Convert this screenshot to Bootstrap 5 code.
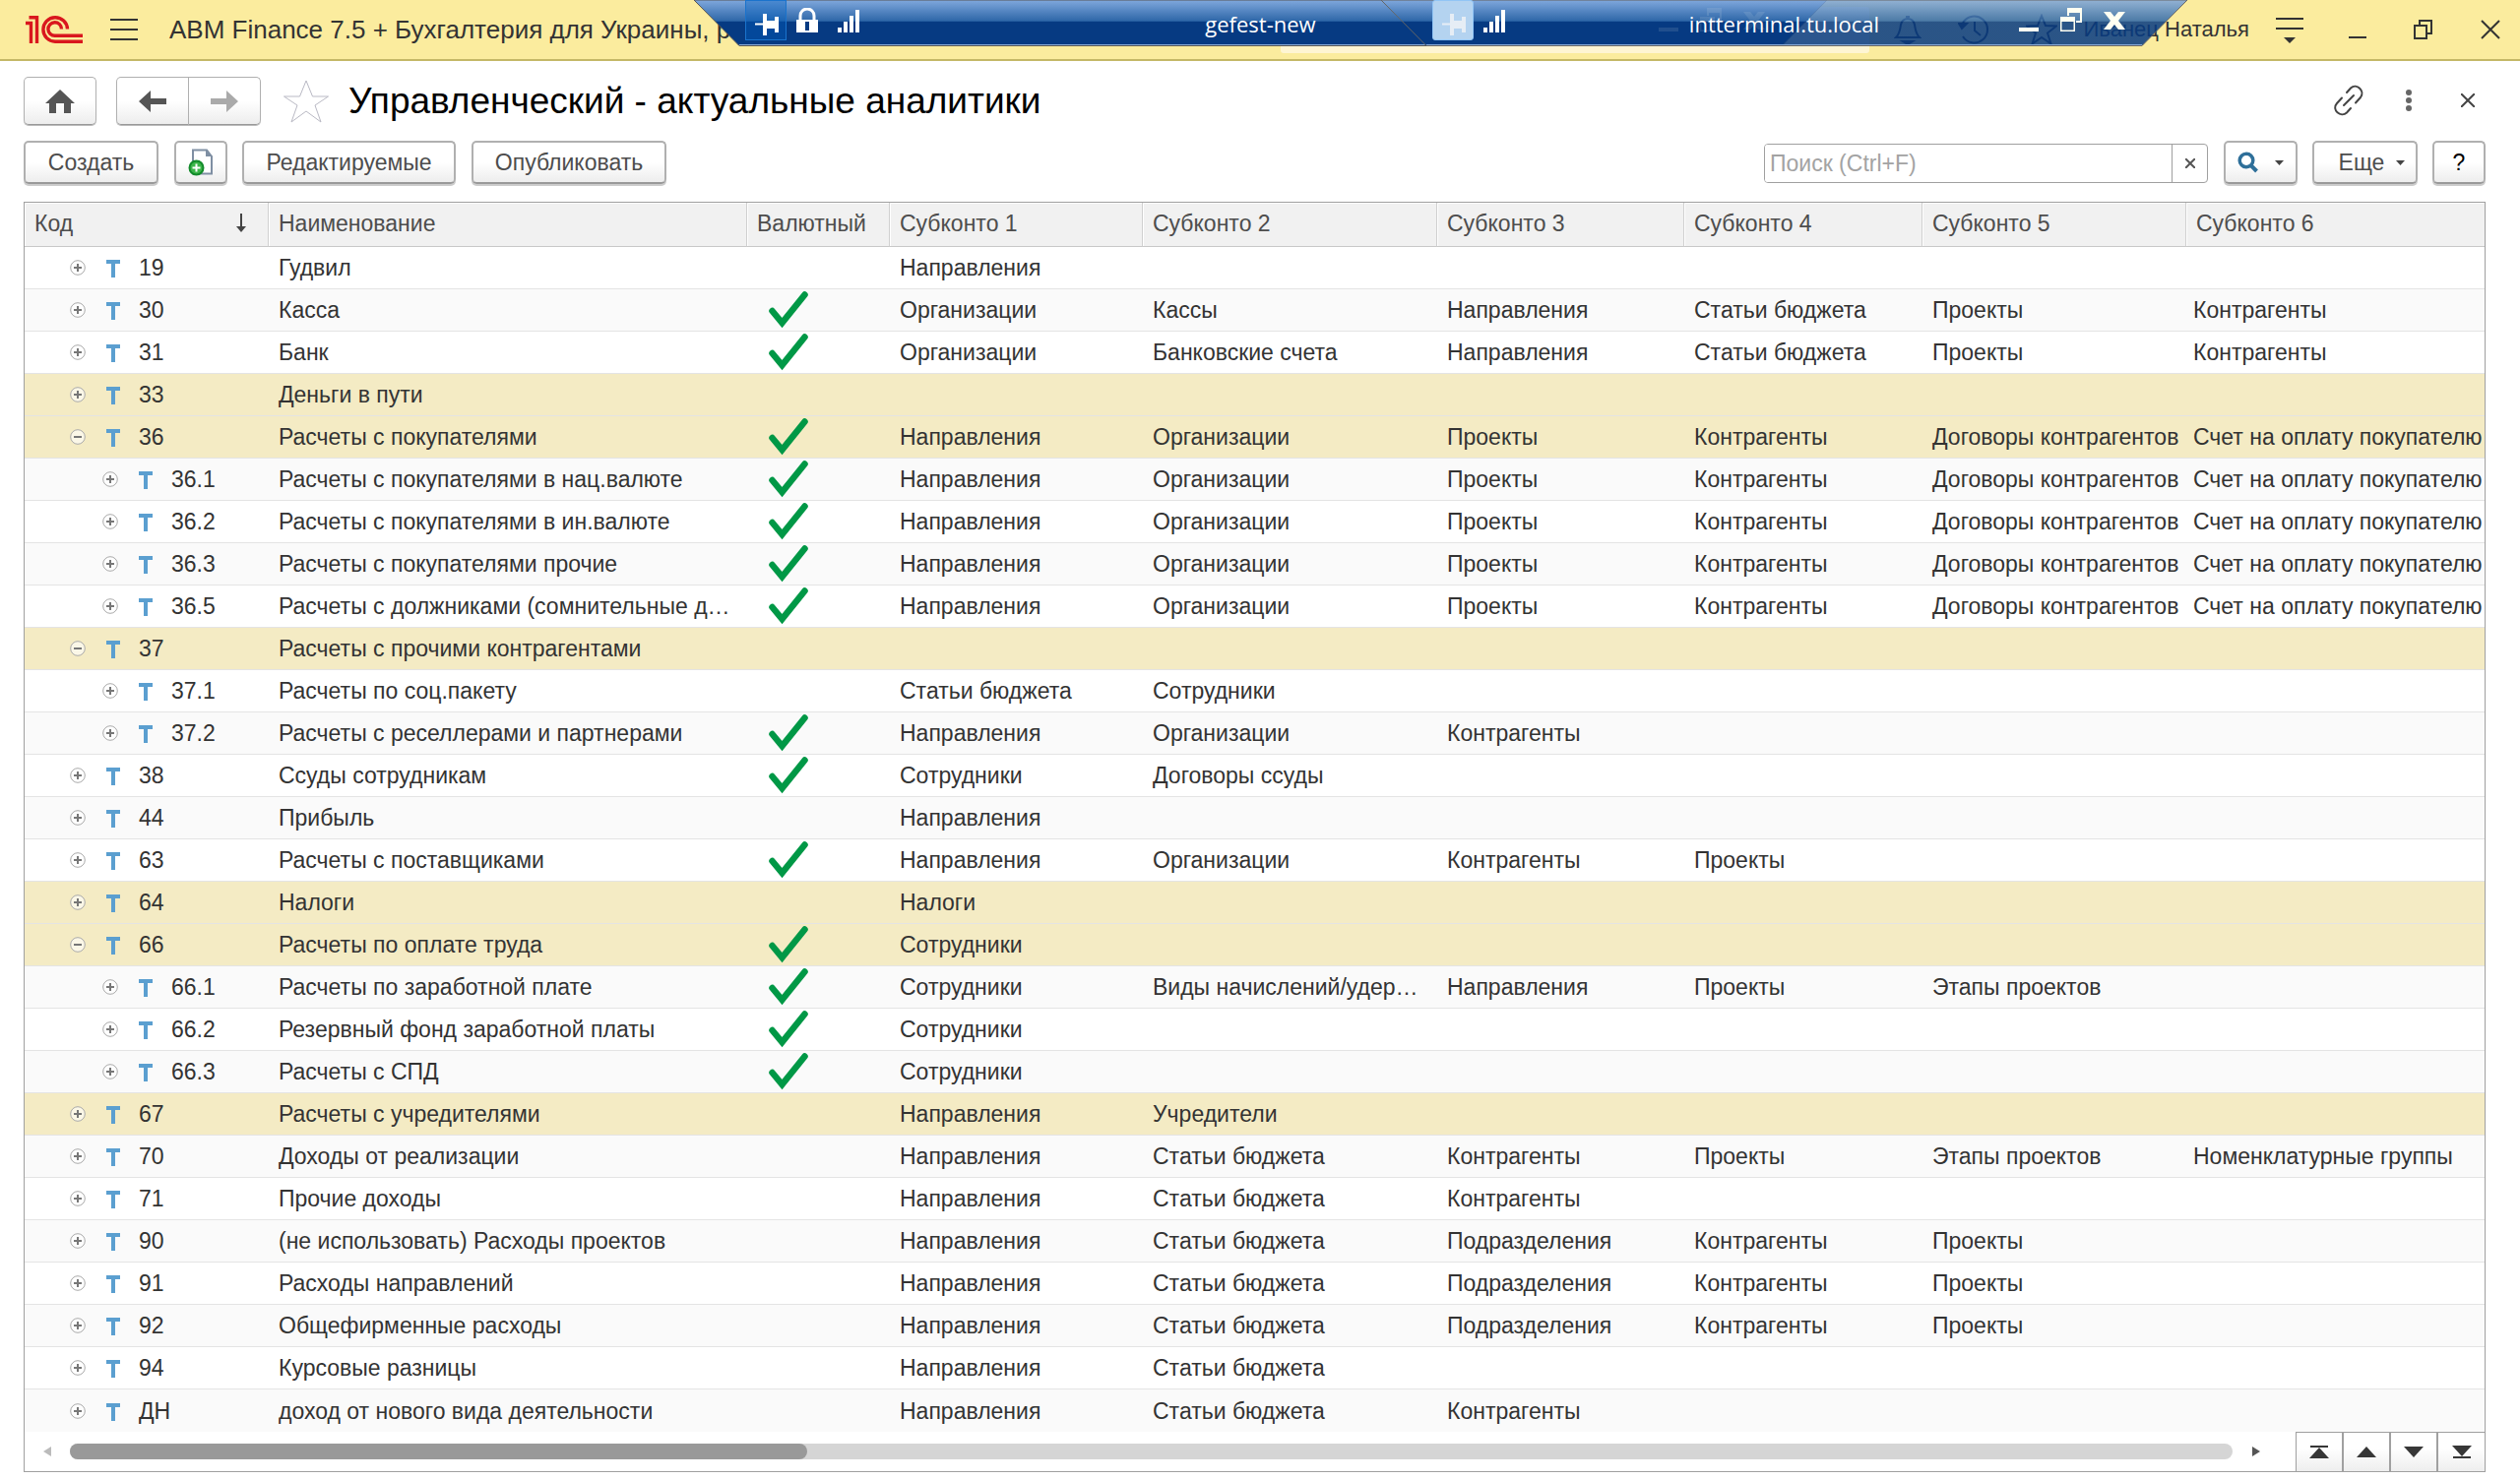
<!DOCTYPE html>
<html lang="ru">
<head>
<meta charset="utf-8">
<meta name="viewport" content="width=device-width, initial-scale=1">
<title>Управленческий - актуальные аналитики</title>
<link href="https://cdn.jsdelivr.net/npm/bootstrap@5.3.0/dist/css/bootstrap.min.css" rel="stylesheet">
<style>
  body { font-family: "Liberation Sans", Arial, sans-serif; font-size: 23px; line-height: 28px; color: #333; background: #fff; }
  svg { display: block; flex: none; }
  .icon-btn { border: 0; background: none; padding: 0; color: inherit; flex: none; }

  /* application title bar */
  .app-bar { height: 62px; background: #fbec9e; border-bottom: 2px solid #c4b866; color: #333; padding: 0 20px 0 26px; }
  .app-title { font-size: 26px; margin-left: 32px; white-space: nowrap; }
  .app-search { width: 598px; height: 47px; background: #fef5d3; border: 0; border-radius: 3px; margin-left: auto; margin-right: 25px; margin-top: 1px; }
  .app-tools { gap: 37px; }
  .user-name { color: inherit; text-decoration: none; font-size: 22px; margin-left: 26px; }
  .service-btn { margin-left: 27px; }
  .window-tools { gap: 48px; margin-left: 46px; }

  /* remote session bars lying over the title bar */
  .session-bar { position: absolute; top: 0; height: 47px; color: #fff; font-family: "Open Sans", "Noto Sans", sans-serif; font-size: 22px; }
  .session-bar > .shape { position: absolute; inset: 0; width: 100%; height: 100%; }
  .session-bar > .inner { position: relative; height: 47px; padding: 0 63px 0 52px; }
  .session-outer { left: 705px; width: 1151px; }
  .session-top { left: 1403px; width: 819px; }
  .session-name { position: absolute; left: 0; right: 0; top: 10px; text-align: center; pointer-events: none; }
  .pin { width: 42px; height: 41px; background: #0060c066; border: 1px solid #1a73cc; margin-right: 10px; }
  .pin svg { margin: 9px 0 0 9px; }
  .pin-lit { background: #b4d3f0; border-color: #92c5f5; border-radius: 3px; color: #e6edf5; }
  .session-controls { gap: 22px; margin-left: auto; color: #fffff2; }
  .ghost { opacity: .7; }

  /* form heading and command bar */
  .form-head { padding: 16px 35px 0 24px; height: 68px; }
  .soft-btn { --bs-btn-font-size: 23px; --bs-btn-line-height: 28px; --bs-btn-color: #4d4d4d; --bs-btn-hover-color: #4d4d4d; --bs-btn-border-color: #b0b0b0; --bs-btn-hover-border-color: #999; --bs-btn-border-radius: 5px; background: linear-gradient(#fff 50%, #ededed); height: 49px; padding: 0; display: flex; align-items: center; justify-content: center; border-bottom-color: #999; box-shadow: 0 1px 0 #bbb; white-space: nowrap; flex: none; }
  .cmd-btn { height: 44px; border-width: 2px; box-shadow: 0 2px 0 #ccc; }
  .home-btn { width: 74px; }
  .nav-pair { width: 147px; margin-left: 20px; }
  .nav-pair .btn { flex: 1; }
  .star-btn { margin: 3px 0 0 23px; }
  .form-title { font-size: 37px; line-height: 50px; font-weight: 400; color: #000; margin: 0 0 0 20px; }
  .head-tools { gap: 42px; margin-left: auto; padding-right: 11px; }
  .cmd-bar { padding: 13px 35px 0 24px; height: 75px; }
  .w-create { width: 137px; }
  .w-copy { width: 54px; margin-left: 16px; }
  .w-edit { width: 217px; margin-left: 15px; }
  .w-publish { width: 198px; margin-left: 16px; }
  .w-find { width: 75px; margin-left: 16px; gap: 16px; }
  .w-more { width: 107px; margin-left: 15px; gap: 12px; padding-left: 14px; }
  .w-help { width: 54px; margin-left: 15px; --bs-btn-color: #000; }
  .find-box { width: 451px; height: 40px; margin-top: 3px; border: 1px solid #a0a0a0; border-radius: 4px; overflow: hidden; }
  .find-box input { flex: 1; min-width: 0; border: 0; outline: 0; padding: 0 5px; color: #333; }
  .find-box input::placeholder { color: #a3a3a3; opacity: 1; }
  .find-box button { width: 36px; border-left: 1px solid #a0a0a0; display: flex; align-items: center; justify-content: center; }

  /* list of accounts */
  .list-frame { margin: 0 35px 9px 24px; border: 1px solid #a0a0a0; }
  .acc-table { width: 100%; table-layout: fixed; border-collapse: separate; border-spacing: 0; }
  .acc-table th { height: 45px; background: #f1f1f1; color: #4d4d4d; font-weight: 400; padding: 0 0 2px 10px; border-bottom: 1px solid #c8c8c8; border-left: 1px solid #d0d0d0; box-shadow: inset 1px 1px #fff; }
  .acc-table th:first-child, .acc-table td:first-child { border-left: 0; }
  .acc-table td { height: 43px; padding: 0 0 0 11px; border-bottom: 1px solid #e4e4e4; white-space: nowrap; overflow: hidden; text-overflow: ellipsis; }
  .acc-table td:nth-child(2) { padding-right: 16px; }
  .acc-table td:nth-child(3) { padding-left: 22px; }
  .acc-table td:last-child { padding-left: 8px; text-overflow: clip; }
  .acc-table tbody tr:nth-child(even) { background: #fafafa; }
  .acc-table tbody tr.is-group { background: #f4ebc4; }
  .acc-table tbody tr:last-child td { border-bottom: 0; }
  .acc-table td.code-cell { padding-left: 46px; }
  .acc-table td.code-sub { padding-left: 79px; }
  .acc-mark { margin: 2px 19px 0 21px; }
  .c-code { width: 247px; } .c-name { width: 486px; } .c-cur { width: 145px; }
  .c-s1 { width: 257px; } .c-s2 { width: 299px; } .c-s3 { width: 251px; }
  .c-s4 { width: 242px; } .c-s5 { width: 268px; }

  .list-foot { height: 40px; }
  .foot-left { margin-left: 19px; }
  .foot-right { margin-right: 36px; }
  .track { flex: 1; height: 16px; border-radius: 8px; background: #d5d5d5; margin: 0 20px 0 19px; }
  .thumb { height: 16px; border-radius: 8px; background: #999; }
  .page-btn { width: 48px; height: 40px; border: 1px solid #a0a0a0; border-bottom: 0; background: linear-gradient(#fff 40%, #eee); display: flex; align-items: center; justify-content: center; padding: 0; color: #373737; }
  .page-btn:last-child { border-right: 0; }
</style>
</head>
<body>

<svg class="position-absolute" width="0" height="0" aria-hidden="true">
  <defs>
    <linearGradient id="barFill" x1="0" y1="0" x2="0" y2="1">
      <stop offset="0" stop-color="#80a8dd"/><stop offset=".46" stop-color="#2e67a8"/>
      <stop offset=".47" stop-color="#063a82"/><stop offset="1" stop-color="#063a82"/>
    </linearGradient>
  </defs>
  <symbol id="i-pin" viewBox="0 0 24 24"><path fill="currentColor" d="M0 10.500h8V1h4v7h8V4h4v16h-4v-4h-8v7H8V12.500H0z"/></symbol>
  <symbol id="i-signal" viewBox="0 0 22 24"><path fill="currentColor" d="M0 19h4v5H0zM6 13h4v11H6zM12 7h4v17h-4zM18 1h4v23h-4z"/></symbol>
  <symbol id="i-min" viewBox="0 0 20 24"><path fill="currentColor" d="M0 16h20v4H0z"/></symbol>
  <symbol id="i-restore" viewBox="0 0 22 24"><path fill="currentColor" fill-rule="evenodd" d="M7 0h15v15h-6v-2h4V5H9v3H7zM0 9h15v15H0zM1.500 14v8.500h12V14z"/></symbol>
  <symbol id="i-x" viewBox="0 0 22 20"><path fill="currentColor" d="M0 0h7l4 5 4-5h7l-7 9 7 9h-7l-4-5-4 5H0l7-9z"/></symbol>
  <symbol id="i-plus" viewBox="0 0 16 16"><circle cx="8" cy="8" r="7.300" fill="#fff" fill-opacity=".6" stroke="#aaa"/><path d="M4 8h8M8 4v8" stroke="#777" stroke-width="2"/></symbol>
  <symbol id="i-minus" viewBox="0 0 16 16"><circle cx="8" cy="8" r="7.300" fill="#fff" fill-opacity=".6" stroke="#aaa"/><path d="M4 8h8" stroke="#777" stroke-width="2"/></symbol>
  <symbol id="i-acc" viewBox="0 0 14 18"><path fill="#5b9fd0" d="M0 0h14v4H9v14H5V4H0z"/></symbol>
  <symbol id="i-check" viewBox="0 0 42 38"><path d="M4.500 20l10 12L37.500 3.500" fill="none" stroke="#009846" stroke-width="6.500" stroke-linecap="round" stroke-linejoin="miter"/></symbol>
</svg>

<header class="app-bar d-flex align-items-center position-relative">
  <svg width="58" height="28" viewBox="0 0 58 28" role="img" aria-label="1С" fill="none" stroke="#d9171e" stroke-width="3.400">
    <path d="M0 7.500h5.500V28M3.500 1.700h8V28"/>
    <path d="M42.500 13.500A12.300 12.300 0 1 0 30 26.300H58"/>
    <path d="M36.500 13.500A6.800 6.800 0 1 0 30 20.300H58"/>
  </svg>
  <button class="icon-btn ms-4 ps-1" type="button" aria-label="Меню"><svg width="28" height="22" stroke="#333" stroke-width="2"><path d="M0 1h28M0 11h28M0 21h28"/></svg></button>
  <div class="app-title">ABM Finance 7.5 + Бухгалтерия для Украины, ре</div>
  <input class="app-search" type="search" aria-label="Поиск">
  <div class="app-tools d-flex align-items-center">
    <button class="icon-btn" type="button" aria-label="Уведомления"><svg width="28" height="30" viewBox="0 0 28 30" fill="none" stroke="#333" stroke-width="2"><path d="M2 23c4-4 4-7 5-13 1-4 4-6 7-6s6 2 7 6c1 6 1 9 5 13z"/><path d="M12 2h4M9 27h10l-5 3z" fill="#333"/></svg></button>
    <button class="icon-btn" type="button" aria-label="История"><svg width="32" height="30" viewBox="0 0 32 30" fill="none" stroke="#333" stroke-width="2"><path d="M5 8a13.500 13.500 0 1 1 0 14M17 7v9l6 5"/><path d="M1 9h8l-5 5z" fill="#333"/></svg></button>
    <button class="icon-btn" type="button" aria-label="Избранное"><svg width="32" height="32" viewBox="0 0 32 32" fill="none" stroke="#333" stroke-width="2"><path d="M16 2l4 10 11 .5-9 7 3.500 11L16 24l-9.500 6.500L10 19.500l-9-7 11-.5z"/></svg></button>
  </div>
  <a class="user-name" href="#">Иванец Наталья</a>
  <button class="icon-btn service-btn" type="button" aria-label="Сервис"><svg width="28" height="28" viewBox="0 0 28 28"><path d="M0 3h28M0 13h28" stroke="#333" stroke-width="2"/><path d="M8 22h12l-6 6z" fill="#333"/></svg></button>
  <div class="window-tools d-flex align-items-center">
    <button class="icon-btn" type="button" aria-label="Свернуть"><svg width="18" height="20"><path d="M0 18h18" stroke="#333" stroke-width="2"/></svg></button>
    <button class="icon-btn" type="button" aria-label="Восстановить"><svg width="20" height="20" fill="none" stroke="#333" stroke-width="2"><path d="M1 6h12v13H1zM6 6V1h12v13h-5"/></svg></button>
    <button class="icon-btn" type="button" aria-label="Закрыть"><svg width="20" height="20" stroke="#333" stroke-width="2"><path d="M1 1l18 18M19 1L1 19"/></svg></button>
  </div>

  <div class="session-bar session-outer">
    <svg class="shape" viewBox="0 0 1151 47" preserveAspectRatio="none"><path d="M0 0h1151l-46 46.500H46z" fill="url(#barFill)" stroke="#555"/><path d="M46 45.500h1059" stroke="#86a9d6"/></svg>
    <div class="session-name">gefest-new</div>
    <div class="inner d-flex align-items-start">
      <button class="icon-btn pin" type="button" aria-label="Закрепить"><svg width="24" height="24"><use href="#i-pin"/></svg></button>
      <svg class="mt-2" width="22" height="26" viewBox="0 0 22 26"><path d="M4 13V8a7 7 0 0 1 14 0v5" fill="none" stroke="#fff" stroke-width="3"/><path fill="#fff" fill-rule="evenodd" d="M0 12h22v13H0zM9 14v9h4v-9z"/></svg>
      <svg class="ms-3 mt-2" width="26" height="25" viewBox="-4 -1 26 25"><use href="#i-signal" width="22" height="24"/></svg>
      <div class="session-controls ghost d-flex pt-2">
        <svg class="mt-1" width="20" height="24"><use href="#i-min"/></svg>
        <svg width="22" height="24"><use href="#i-restore"/></svg>
        <svg class="mt-1" width="22" height="20"><use href="#i-x"/></svg>
      </div>
    </div>
  </div>

  <div class="session-bar session-top">
    <svg class="shape" viewBox="0 0 819 47" preserveAspectRatio="none"><path d="M0 0h819l-46 46.500H46z" fill="url(#barFill)" fill-opacity=".85" stroke="#666"/><path d="M46 45.500h727" stroke="#86a9d6"/></svg>
    <div class="session-name">intterminal.tu.local</div>
    <div class="inner d-flex align-items-start">
      <button class="icon-btn pin pin-lit" type="button" aria-label="Закрепить"><svg width="24" height="24"><use href="#i-pin"/></svg></button>
      <svg class="mt-2" width="22" height="25" viewBox="0 -1 22 25"><use href="#i-signal" width="22" height="24"/></svg>
      <div class="session-controls d-flex align-items-start pt-2">
        <button class="icon-btn mt-1" type="button" aria-label="Свернуть сеанс"><svg width="20" height="24"><use href="#i-min"/></svg></button>
        <button class="icon-btn" type="button" aria-label="Окно сеанса"><svg width="22" height="24"><use href="#i-restore"/></svg></button>
        <button class="icon-btn mt-1" type="button" aria-label="Закрыть сеанс"><svg width="22" height="20"><use href="#i-x"/></svg></button>
      </div>
    </div>
  </div>
</header>

<main>
  <div class="form-head d-flex align-items-start">
    <button class="btn soft-btn home-btn" type="button" aria-label="Домой"><svg width="30" height="24" viewBox="0 0 30 24" fill="#555"><path d="M15 0l15 14h-4v10h-7V14h-8v10H4V14H0z"/></svg></button>
    <div class="btn-group nav-pair">
      <button class="btn soft-btn" type="button" aria-label="Назад"><svg width="28" height="22" viewBox="0 0 28 22" fill="#555"><path d="M0 11L12 0v8h16v6H12v8z"/></svg></button>
      <button class="btn soft-btn" type="button" aria-label="Вперед"><svg width="28" height="22" viewBox="0 0 28 22" fill="#aaa"><path d="M28 11L16 0v8H0v6h16v8z"/></svg></button>
    </div>
    <button class="icon-btn star-btn" type="button" aria-label="В избранное"><svg width="46" height="44" viewBox="0 0 46 44" fill="none" stroke="#b9b9c4"><path d="M23 1l6.500 16H45.500L32 26l6 17-15-11L8 43l6-17L.5 17H16.500z"/></svg></button>
    <h1 class="form-title">Управленческий - актуальные аналитики</h1>
    <div class="head-tools d-flex align-items-center pt-2">
      <button class="icon-btn" type="button" aria-label="Ссылка"><svg width="32" height="32" viewBox="0 0 32 32" fill="none" stroke="#444" stroke-width="2" stroke-linecap="round"><path d="M11 21L21 11M14 8l4-4.500c6-5.500 15 3 10 9.500l-5 5.500M18 24l-4 4.500c-6 5.500-16-3-10-9.500l5-5.500"/></svg></button>
      <button class="icon-btn" type="button" aria-label="Действия"><svg width="6" height="22" fill="#666"><circle cx="3" cy="3" r="3"/><circle cx="3" cy="11" r="3"/><circle cx="3" cy="19" r="3"/></svg></button>
      <button class="icon-btn ms-2" type="button" aria-label="Закрыть форму"><svg width="14" height="14" stroke="#444" stroke-width="2"><path d="M0 0l14 14M14 0L0 14"/></svg></button>
    </div>
  </div>

  <div class="cmd-bar d-flex align-items-start">
    <button class="btn soft-btn cmd-btn w-create" type="button">Создать</button>
    <button class="btn soft-btn cmd-btn w-copy" type="button" aria-label="Скопировать"><svg width="26" height="28" viewBox="0 0 26 28"><path d="M5 1.500h14L24 8v17.500H5z" fill="#fff" stroke="#7f8fa3" stroke-width="2"/><path d="M18 1v7h7z" fill="#7f8fa3"/><circle cx="8.500" cy="19.500" r="7" fill="#3cb54a" stroke="#128a2a" stroke-width="2"/><path d="M4.500 19.500h8M8.500 15.500v8" stroke="#fff" stroke-width="2"/></svg></button>
    <button class="btn soft-btn cmd-btn w-edit" type="button">Редактируемые</button>
    <button class="btn soft-btn cmd-btn w-publish" type="button">Опубликовать</button>
    <div class="find-box d-flex ms-auto">
      <input type="text" aria-label="Поиск" placeholder="Поиск (Ctrl+F)">
      <button class="icon-btn" type="button" aria-label="Очистить"><svg width="10" height="10" stroke="#555" stroke-width="2"><path d="M0 0l10 10M10 0L0 10"/></svg></button>
    </div>
    <button class="btn soft-btn cmd-btn w-find" type="button" aria-label="Найти"><svg width="22" height="22" viewBox="0 0 22 22" fill="none" stroke="#2e6f99"><circle cx="9" cy="9" r="6.800" stroke-width="3.500"/><path d="M13.500 14l6 6" stroke-width="4"/></svg><svg width="9" height="5"><path d="M0 0h9l-4.500 5z" fill="#444"/></svg></button>
    <button class="btn soft-btn cmd-btn w-more" type="button">Еще<svg width="9" height="5"><path d="M0 0h9l-4.500 5z" fill="#444"/></svg></button>
    <button class="btn soft-btn cmd-btn w-help" type="button">?</button>
  </div>

  <div class="list-frame">
    <table class="acc-table">
      <colgroup><col class="c-code"><col class="c-name"><col class="c-cur"><col class="c-s1"><col class="c-s2"><col class="c-s3"><col class="c-s4"><col class="c-s5"><col></colgroup>
      <thead>
        <tr>
          <th scope="col"><div class="d-flex align-items-center justify-content-between">Код<svg class="me-3" width="20" height="20" viewBox="0 0 20 20"><path d="M9 0v15" stroke="#444" stroke-width="2"/><path d="M4 13h10l-5 6z" fill="#444"/></svg></div></th>
          <th scope="col">Наименование</th><th scope="col">Валютный</th><th scope="col">Субконто 1</th><th scope="col">Субконто 2</th><th scope="col">Субконто 3</th><th scope="col">Субконто 4</th><th scope="col">Субконто 5</th><th scope="col">Субконто 6</th>
        </tr>
      </thead>
      <tbody id="accounts"></tbody>
    </table>
    <div class="list-foot d-flex align-items-center">
      <svg class="foot-left" width="8" height="10"><path d="M8 0v10L0 5z" fill="#bbb"/></svg>
      <div class="track"><div class="thumb" style="width:34.1%"></div></div>
      <svg class="foot-right" width="8" height="10"><path d="M0 0v10l8-5z" fill="#555"/></svg>
      <div class="d-flex">
        <button class="page-btn" type="button" aria-label="В начало"><svg width="20" height="14" fill="currentColor"><path d="M1 0h18v2H1zM10 2l10 11H0z"/></svg></button>
        <button class="page-btn" type="button" aria-label="Вверх"><svg width="20" height="12" fill="currentColor"><path d="M10 0l10 11H0z"/></svg></button>
        <button class="page-btn" type="button" aria-label="Вниз"><svg width="20" height="12" fill="currentColor"><path d="M10 11L0 0h20z"/></svg></button>
        <button class="page-btn" type="button" aria-label="В конец"><svg width="20" height="14" fill="currentColor"><path d="M1 11h18v2H1zM10 11L0 0h20z"/></svg></button>
      </div>
    </div>
  </div>
</main>

<script src="https://cdn.jsdelivr.net/npm/bootstrap@5.3.0/dist/js/bootstrap.bundle.min.js"></script>
<script>
  // code | name | flags: g = group, o = opened, v = currency | subconto...
  const data = `19|Гудвил||Направления
30|Касса|v|Организации|Кассы|Направления|Статьи бюджета|Проекты|Контрагенты
31|Банк|v|Организации|Банковские счета|Направления|Статьи бюджета|Проекты|Контрагенты
33|Деньги в пути|g
36|Расчеты с покупателями|gov|Направления|Организации|Проекты|Контрагенты|Договоры контрагентов|Счет на оплату покупателю
36.1|Расчеты с покупателями в нац.валюте|v|Направления|Организации|Проекты|Контрагенты|Договоры контрагентов|Счет на оплату покупателю
36.2|Расчеты с покупателями в ин.валюте|v|Направления|Организации|Проекты|Контрагенты|Договоры контрагентов|Счет на оплату покупателю
36.3|Расчеты с покупателями прочие|v|Направления|Организации|Проекты|Контрагенты|Договоры контрагентов|Счет на оплату покупателю
36.5|Расчеты с должниками (сомнительные д…|v|Направления|Организации|Проекты|Контрагенты|Договоры контрагентов|Счет на оплату покупателю
37|Расчеты с прочими контрагентами|go
37.1|Расчеты по соц.пакету||Статьи бюджета|Сотрудники
37.2|Расчеты с реселлерами и партнерами|v|Направления|Организации|Контрагенты
38|Ссуды сотрудникам|v|Сотрудники|Договоры ссуды
44|Прибыль||Направления
63|Расчеты с поставщиками|v|Направления|Организации|Контрагенты|Проекты
64|Налоги|g|Налоги
66|Расчеты по оплате труда|gov|Сотрудники
66.1|Расчеты по заработной плате|v|Сотрудники|Виды начислений/удер…|Направления|Проекты|Этапы проектов
66.2|Резервный фонд заработной платы|v|Сотрудники
66.3|Расчеты с СПД|v|Сотрудники
67|Расчеты с учредителями|g|Направления|Учредители
70|Доходы от реализации||Направления|Статьи бюджета|Контрагенты|Проекты|Этапы проектов|Номенклатурные группы
71|Прочие доходы||Направления|Статьи бюджета|Контрагенты
90|(не использовать) Расходы проектов||Направления|Статьи бюджета|Подразделения|Контрагенты|Проекты
91|Расходы направлений||Направления|Статьи бюджета|Подразделения|Контрагенты|Проекты
92|Общефирменные расходы||Направления|Статьи бюджета|Подразделения|Контрагенты|Проекты
94|Курсовые разницы||Направления|Статьи бюджета
ДН|доход от нового вида деятельности||Направления|Статьи бюджета|Контрагенты`;
  document.getElementById('accounts').innerHTML = data.split('\n').map(line => {
    const [code, name, flags, ...subs] = line.split('|');
    const open = flags.includes('o');
    const cells = Array.from({ length: 6 }, (_, i) => `<td>${subs[i] || ''}</td>`).join('');
    return `<tr class="${flags.includes('g') ? 'is-group' : ''}">
      <td class="code-cell ${code.includes('.') ? 'code-sub' : ''}"><div class="d-flex align-items-center">
        <button class="icon-btn" type="button" aria-label="${open ? 'Свернуть' : 'Развернуть'} ${code}"><svg width="16" height="16"><use href="#${open ? 'i-minus' : 'i-plus'}"/></svg></button>
        <svg class="acc-mark" width="14" height="18"><use href="#i-acc"/></svg>${code}</div></td>
      <td>${name}</td>
      <td>${flags.includes('v') ? '<svg width="42" height="38" role="img" aria-label="Да"><use href="#i-check"/></svg>' : ''}</td>${cells}</tr>`;
  }).join('');
</script>
</body>
</html>
